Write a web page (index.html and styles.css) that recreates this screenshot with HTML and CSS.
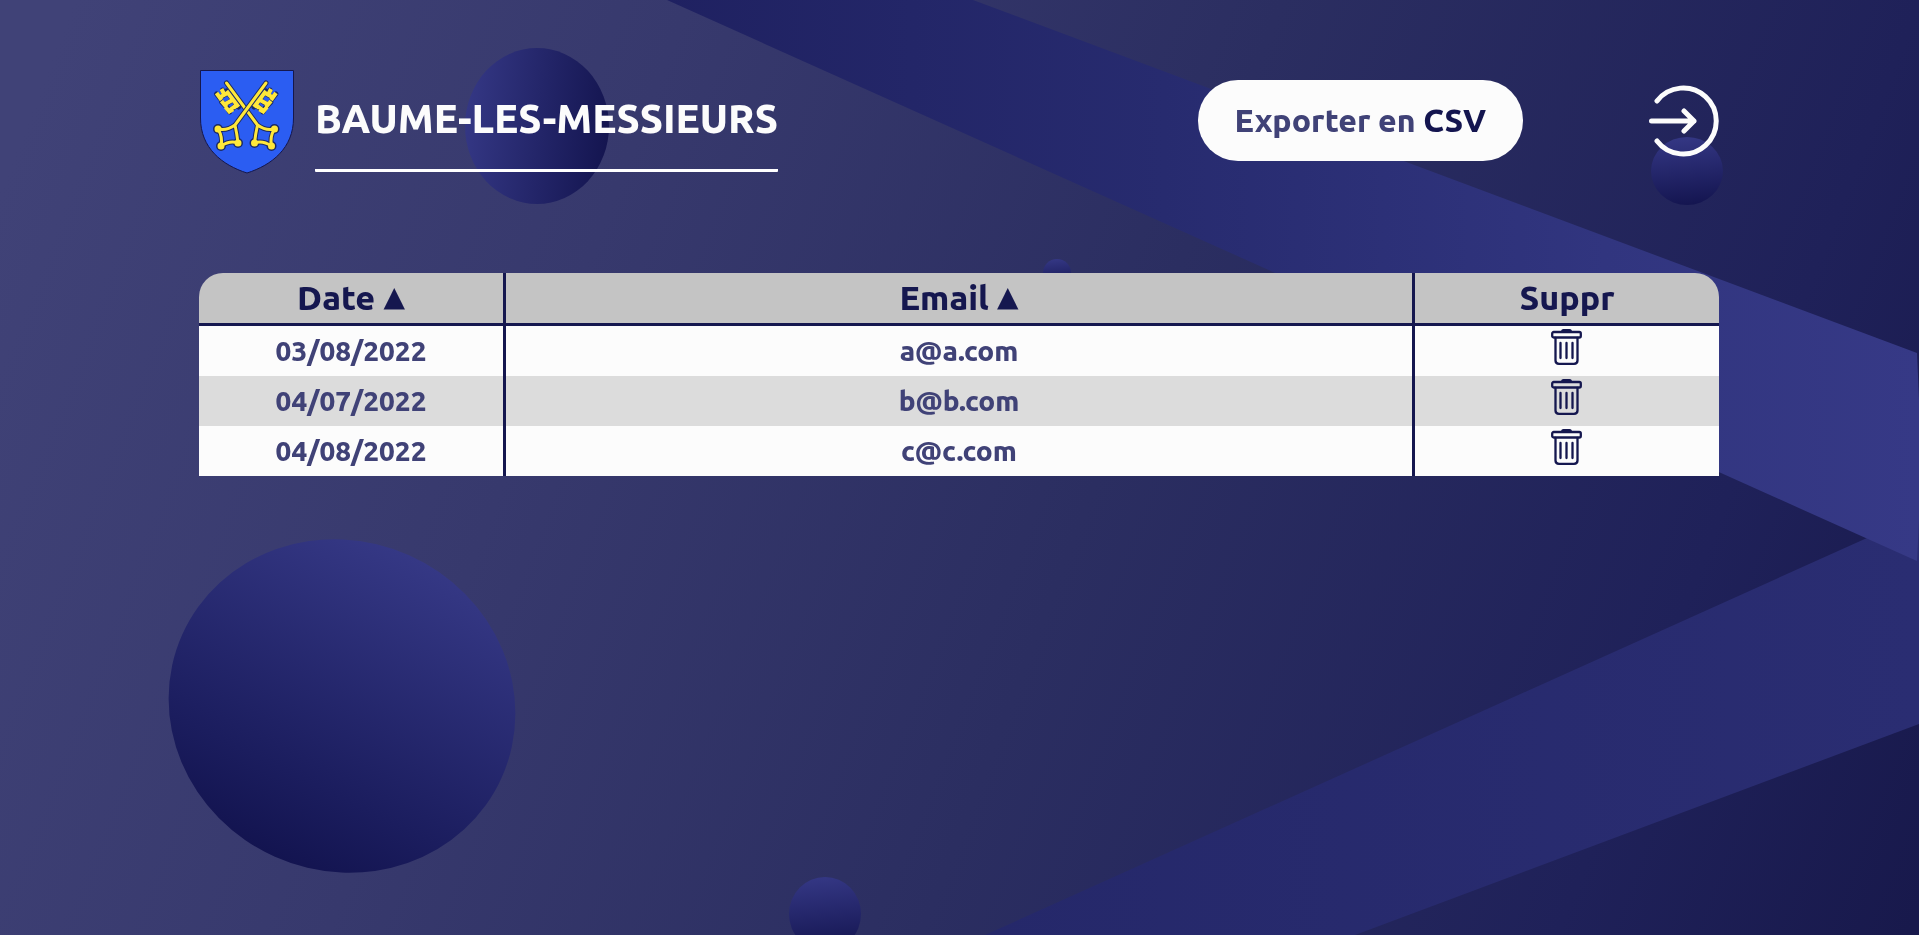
FILE: index.html
```html
<!DOCTYPE html>
<html lang="fr">
<head>
<meta charset="utf-8">
<title>Baume-les-Messieurs</title>
<link rel="stylesheet" href="styles.css">
</head>
<body>
<svg class="backdrop" viewBox="0 0 1919 935" preserveAspectRatio="none" aria-hidden="true">
  <defs>
    <linearGradient id="sky" gradientUnits="userSpaceOnUse" x1="20" y1="140" x2="1930" y2="880">
      <stop offset="0" stop-color="#404277"/>
      <stop offset=".28" stop-color="#37396d"/>
      <stop offset=".55" stop-color="#2b2e61"/>
      <stop offset=".84" stop-color="#1f2159"/>
      <stop offset="1" stop-color="#18194c"/>
    </linearGradient>
    <linearGradient id="beam" gradientUnits="userSpaceOnUse" x1="660" y1="0" x2="1919" y2="0">
      <stop offset="0" stop-color="#1f2161"/>
      <stop offset=".4" stop-color="#272b6f"/>
      <stop offset=".75" stop-color="#31357f"/>
      <stop offset="1" stop-color="#363986"/>
    </linearGradient>
    <linearGradient id="beam-low" gradientUnits="userSpaceOnUse" x1="980" y1="0" x2="1919" y2="0">
      <stop offset="0" stop-color="#25286a"/>
      <stop offset="1" stop-color="#2a2d72"/>
    </linearGradient>
    <linearGradient id="ball-side" x1="0" y1=".45" x2="1" y2=".55">
      <stop offset="0" stop-color="#343784"/>
      <stop offset="1" stop-color="#141550"/>
    </linearGradient>
    <linearGradient id="ball-big" x1=".52" y1="0" x2=".48" y2="1">
      <stop offset="0" stop-color="#353885"/>
      <stop offset=".75" stop-color="#1b1d5e"/>
      <stop offset="1" stop-color="#131450"/>
    </linearGradient>
    <linearGradient id="ball" x1=".45" y1="0" x2=".55" y2="1">
      <stop offset="0" stop-color="#343784"/>
      <stop offset="1" stop-color="#141550"/>
    </linearGradient>
  </defs>
  <rect width="1919" height="935" fill="url(#sky)"/>
  <path d="M985 935 1867 538 1919 520V724L1355 935Z" fill="url(#beam-low)"/>
  <path d="M667 0H973L1917 353 1919 400V520L1917 561Z" fill="url(#beam)"/>
  <ellipse cx="537" cy="126" rx="72" ry="78" fill="url(#ball-side)"/>
  <ellipse cx="1687" cy="171" rx="36" ry="34" fill="url(#ball)"/>
  <circle cx="1057" cy="273" r="14" fill="url(#ball)"/>
  <ellipse cx="342" cy="706" rx="175" ry="165" fill="url(#ball-big)" transform="rotate(24 342 706)"/>
  <ellipse cx="825" cy="914" rx="36" ry="37" fill="url(#ball)"/>
</svg>
<svg class="sprite" aria-hidden="true">
  <symbol id="trash" viewBox="0 0 31 36">
    <path d="M10 3Q10 0 12.500 0H18.500Q21 0 21 3Z" fill="currentColor"/>
    <g fill="none" stroke="currentColor" stroke-width="2.300" stroke-linecap="round">
      <rect x="1.200" y="3" width="28.600" height="5.500" rx="1.500"/>
      <path d="M4.500 9V31.500Q4.500 34.800 8 34.800H23Q26.500 34.800 26.500 31.500V9"/>
      <path d="M9.500 14V29M15.500 14V29M21.500 14V29"/>
    </g>
  </symbol>
</svg>
<main class="page">
  <header class="header">
    <div class="brand">
      <svg class="crest" viewBox="0 0 94 104" role="img" aria-label="Blason de Baume-les-Messieurs">
        <defs>
          <g id="key">
            <g class="key-edge">
              <path d="M66 13 35 55Q37 64 38 73M35 55Q27 61 18 59M18 59Q23 67 21 76M38 73Q30 70 21 76"/>
              <path d="M66 21 60 29 54 37M65 23 73 28M72 29 76 24M68 24 70 20M60 30 68 35M67 36 71 32M56 35 63 41M63 42 65 38M57 36 59 38"/>
              <circle cx="18" cy="59" r="2.500"/><circle cx="21" cy="76" r="2.500"/><circle cx="38" cy="73" r="2.500"/>
            </g>
            <g class="key-fill">
              <path d="M66 13 35 55Q37 64 38 73M35 55Q27 61 18 59M18 59Q23 67 21 76M38 73Q30 70 21 76"/>
              <path class="key-bars" d="M66 21 60 29 54 37M65 23 74 28M71 30 76 23M68 25 71 19M60 30 69 35M66 37 71 31M56 35 64 41M62 43 67 37M57 36 59 38M60 42 62 39"/>
              <circle cx="18" cy="59" r="2"/><circle cx="21" cy="76" r="2"/><circle cx="38" cy="73" r="2"/>
            </g>
          </g>
        </defs>
        <path d="M.5.5H93.500V48C93.500 78 72 95 47 103 22 95 .5 78 .5 48Z" fill="#2b5df2" stroke="#15174d"/>
        <use href="#key" transform="matrix(-1 0 0 1 92.500 0)"/>
        <use href="#key"/>
      </svg>
      <h1 class="town">BAUME-LES-MESSIEURS</h1>
    </div>
    <div class="actions">
      <button class="export" type="button">Exporter en <span class="format">CSV</span></button>
      <button class="logout" type="button" aria-label="Se déconnecter">
        <svg class="logout-icon" viewBox="0 0 70 70" aria-hidden="true"><path d="M8 15A33 33 0 1 1 8 55M2.500 35H45M35 25 45 35 35 45"/></svg>
      </button>
    </div>
  </header>
  <table class="list">
    <thead>
      <tr><th class="col-date" scope="col">Date <span class="sort">▲</span></th><th class="col-mail" scope="col">Email <span class="sort">▲</span></th><th class="col-del" scope="col">Suppr</th></tr>
    </thead>
    <tbody>
      <tr><td>03/08/2022</td><td>a@a.com</td><td><button class="delete" type="button" aria-label="Supprimer a@a.com"><svg class="trash"><use href="#trash"/></svg></button></td></tr>
      <tr><td>04/07/2022</td><td>b@b.com</td><td><button class="delete" type="button" aria-label="Supprimer b@b.com"><svg class="trash"><use href="#trash"/></svg></button></td></tr>
      <tr><td>04/08/2022</td><td>c@c.com</td><td><button class="delete" type="button" aria-label="Supprimer c@c.com"><svg class="trash"><use href="#trash"/></svg></button></td></tr>
    </tbody>
  </table>
</main>
</body>
</html>
```
FILE: styles.css
```css
* {
  box-sizing: border-box;
}

body {
  margin: 0;
  background: #2d2f63;
  color: #404277;
  font-family: Ubuntu, "Noto Sans", sans-serif;
  font-weight: 800;
}

button {
  padding: 0;
  border: 0;
  background: none;
  color: inherit;
  font-family: inherit;
  font-weight: inherit;
  cursor: pointer;
}

.backdrop {
  position: fixed;
  inset: 0;
  z-index: -1;
  width: 100%;
  height: 100%;
}

.sprite {
  display: none;
}

.page {
  padding: 70px 200px 70px 199px;
}

.header {
  display: flex;
  justify-content: space-between;
  align-items: center;
  margin-bottom: 99px;
}

.brand {
  display: flex;
  align-items: flex-start;
  gap: 21px;
  padding-left: 1px;
}

.crest {
  display: block;
  width: 94px;
  height: 104px;
}

.key-edge,
.key-fill {
  fill: none;
  stroke-linecap: round;
  stroke-linejoin: round;
}

.key-edge {
  stroke: #1b2a63;
  stroke-width: 5;
}

.key-fill {
  stroke: #ffe83a;
  stroke-width: 3;
}

.key-fill circle {
  fill: #ffe83a;
}

.key-fill .key-bars {
  stroke-linecap: butt;
  stroke-width: 4;
}

.town {
  margin: 0;
  padding: 26px 0 27px;
  border-bottom: 3px solid #fff;
  border-radius: 1px;
  color: #fcfcfc;
  font-size: 40px;
  font-weight: inherit;
  line-height: 46px;
}

.actions {
  display: flex;
  align-items: center;
  gap: 126px;
  margin-bottom: 3px;
}

.export {
  padding: 0 37px;
  border-radius: 40px;
  background: #fcfcfc;
  font-size: 32px;
  line-height: 81px;
}

.format {
  color: #14154f;
}

.logout-icon {
  display: block;
  overflow: visible;
  width: 70px;
  height: 70px;
  fill: none;
  stroke: #fcfcfc;
  stroke-width: 5;
  stroke-linecap: round;
  stroke-linejoin: round;
}

.list {
  width: 100%;
  border-spacing: 0;
  table-layout: fixed;
  text-align: center;
}

.col-date {
  width: 20.2%;
  border-top-left-radius: 24px;
}

.col-mail {
  width: 59.8%;
}

.col-del {
  width: 20%;
  border-top-right-radius: 24px;
}

th,
td {
  height: 50px;
  padding: 0;
  border-right: 3px solid #15174f;
  font-weight: inherit;
  line-height: 50px;
}

th:last-child,
td:last-child {
  border-right: 0;
}

th {
  height: 53px;
  padding-bottom: 2px;
  border-bottom: 3px solid #15174f;
  background: #c4c4c4;
  color: #15174f;
  font-size: 34px;
  line-height: 48px;
}

.sort {
  font-family: "DejaVu Sans", sans-serif;
  font-size: 28px;
  line-height: 1;
  vertical-align: 4px;
}

td {
  background: #fcfcfc;
  font-size: 28px;
}

tr:nth-child(even) td {
  background: #dcdcdc;
}

td:last-child {
  padding-top: 3px;
  vertical-align: top;
  line-height: 0;
}

.delete {
  color: #15174f;
}

.trash {
  display: block;
  width: 31px;
  height: 36px;
}
```
